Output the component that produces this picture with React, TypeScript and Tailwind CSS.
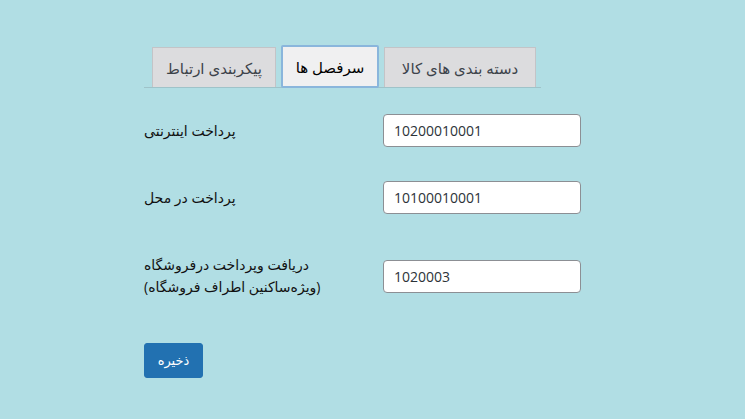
import React from 'react';

const tabs = [
  { label: 'پیکربندی ارتباط', active: false, w: 'w-[124px]' },
  { label: 'سرفصل ها', active: true, w: 'w-[98px]' },
  { label: 'دسته بندی های کالا', active: false, w: 'w-[152px]' },
];

const rows = [
  { label: ['پرداخت اینترنتی'], value: '10200010001', pad: 'py-[17px]' },
  { label: ['پرداخت در محل'], value: '10100010001', pad: 'py-[17px]' },
  {
    label: ['دریافت وپرداخت درفروشگاه', '(ویژه‌ساکنین اطراف فروشگاه)'],
    value: '1020003',
    pad: 'pt-[23px] pb-[17px]',
  },
];

const font = { fontFamily: '"Open Sans", "DejaVu Sans", sans-serif' };

export default function App() {
  return (
    <div className="w-[745px] h-[419px] bg-[#b1dee4] overflow-hidden" style={font}>
      <div className="pl-[144px] pt-[46px] w-[600px]">
        {/* Tabs */}
        <div className="w-[397px] flex items-end justify-end gap-[5px] pr-[5px] border-b border-[#9fc3c9] h-[42px]">
          {tabs.map((t) => (
            <div
              key={t.label}
              dir="rtl"
              className={
                t.active
                  ? `${t.w} h-[43px] -mb-px flex items-center justify-center whitespace-nowrap bg-[#f0f0f1] border-2 border-[#8ab6dc] text-black text-[15px] leading-[20px] rounded-[2px]`
                  : `${t.w} h-[40px] flex items-center justify-center whitespace-nowrap bg-[#dcdcde] border border-[#c3c4c7] border-b-0 text-[#3c434a] text-[15px] leading-[20px]`
              }
            >
              {t.label}
            </div>
          ))}
        </div>

        {/* Form rows */}
        <div className="mt-[9px] w-[437px]">
          {rows.map((r) => (
            <div key={r.value} className={`flex items-center justify-between ${r.pad}`}>
              <div dir="rtl" className="text-left text-[14px] text-[#111]">
                {r.label.map((l) => (
                  <div key={l} className="h-[22px] leading-[22px] whitespace-nowrap">
                    {l}
                  </div>
                ))}
              </div>
              <input
                readOnly
                value={r.value}
                className="w-[198px] h-[33px] bg-white border border-[#8c8f94] rounded-[4px] px-[10px] text-[14px] text-[#2c3338] outline-none"
                style={font}
              />
            </div>
          ))}
        </div>

        <button
          dir="rtl"
          className="mt-[28px] w-[59px] h-[35px] bg-[#2271b1] text-white text-[13px] rounded-[3px] border border-[#2271b1]"
        >
          ذخیره
        </button>
      </div>
    </div>
  );
}
